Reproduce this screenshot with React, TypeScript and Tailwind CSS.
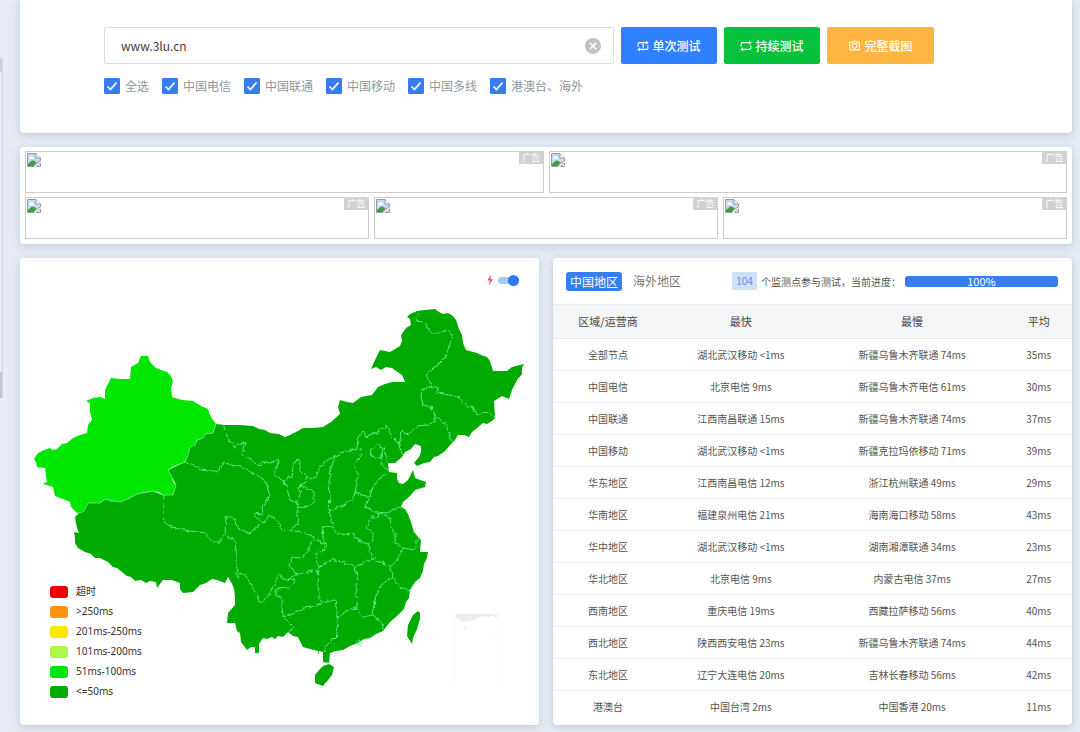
import { useState } from 'react';
import { RiCameraLine } from 'react-icons/ri';

const operators = ['全选', '中国电信', '中国联通', '中国移动', '中国多线', '港澳台、海外'];

const rows = [
  ['全部节点', '湖北武汉移动 <1ms', '新疆乌鲁木齐联通 74ms', '35ms'],
  ['中国电信', '北京电信 9ms', '新疆乌鲁木齐电信 61ms', '30ms'],
  ['中国联通', '江西南昌联通 15ms', '新疆乌鲁木齐联通 74ms', '37ms'],
  ['中国移动', '湖北武汉移动 <1ms', '新疆克拉玛依移动 71ms', '39ms'],
  ['华东地区', '江西南昌电信 12ms', '浙江杭州联通 49ms', '29ms'],
  ['华南地区', '福建泉州电信 21ms', '海南海口移动 58ms', '43ms'],
  ['华中地区', '湖北武汉移动 <1ms', '湖南湘潭联通 34ms', '23ms'],
  ['华北地区', '北京电信 9ms', '内蒙古电信 37ms', '27ms'],
  ['西南地区', '重庆电信 19ms', '西藏拉萨移动 56ms', '40ms'],
  ['西北地区', '陕西西安电信 23ms', '新疆乌鲁木齐联通 74ms', '44ms'],
  ['东北地区', '辽宁大连电信 20ms', '吉林长春移动 56ms', '42ms'],
  ['港澳台', '中国台湾 2ms', '中国香港 20ms', '11ms'],
];

const legend = [
  { label: '超时', color: 'bg-[#f00000]' },
  { label: '>250ms', color: 'bg-[#ff9310]' },
  { label: '201ms-250ms', color: 'bg-[#fbea00]' },
  { label: '101ms-200ms', color: 'bg-[#aef64a]' },
  { label: '51ms-100ms', color: 'bg-[#00e410]' },
  { label: '<=50ms', color: 'bg-[#00aa00]' },
];

const cardClass = 'bg-white rounded shadow-[0_2px_8px_rgba(130,150,175,0.4)]';

const XINJIANG =
  'M141 356L148 356L150 362L156 368L161 370L167 372L171 376L173 382L171 388L172 397L182 400L193 401L201 406L208 409L210 415L213 420L216 424L213 433L205 434L203 438L197 440L195 445L190 447L188 455L185 462L178 465L172 467L168 470L172 477L173 482L176 485L173 495L163 495L159 492L153 491L145 492L137 494L130 498L120 502L112 502L105 499L100 503L88 503L86 508L83 512L77 513L71 507L70 502L63 499L55 496L53 487L43 484L47 482L45 468L37 467L36 462L34 459L38 453L44 450L50 448L52 450L57 449L62 444L67 443L73 438L80 435L87 433L88 425L92 420L90 412L90 403L86 401L93 398L100 397L105 399L105 390L108 384L111 378L120 379L130 379L131 367L138 363Z';

const MAINLAND =
  'M216 424L225 425L240 425L253 426L259 429L265 430L270 433L279 434L285 437L290 435L296 432L303 428L313 428L323 427L331 422L340 414L338 407L340 400L347 402L353 403L361 397L372 395L378 387L385 384L392 382L405 382L402 375L392 368L386 367L381 370L376 367L371 369L374 362L380 350L390 352L400 346L402 341L401 335L406 328L411 325L410 319L407 317L410 314L417 311L425 310L435 309L439 312L443 314L448 313L453 316L456 320L459 329L462 335L463 343L466 350L477 353L481 355L487 357L490 361L493 371L507 371L512 367L524 364L522 368L522 374L517 380L512 390L509 399L502 396L494 401L495 418L492 421L487 424L483 423L476 429L472 432L469 437L464 435L458 435L455 440L452 443L445 451L438 456L434 457L430 462L424 463L417 466L414 463L419 457L421 452L421 446L415 444L411 449L405 452L402 457L395 463L388 463L389 472L397 473L397 479L399 483L403 484L408 480L413 470L415 478L420 480L426 482L425 487L415 490L410 496L403 502L401 507L405 509L408 514L411 522L414 532L418 537L421 540L420 552L428 552L427 558L424 564L423 571L420 578L415 582L410 590L409 598L406 602L404 609L397 616L390 622L383 631L376 634L370 638L364 639L358 643L350 646L343 650L336 651L330 653L329 663L323 662L323 652L319 651L319 656L318 651L310 649L303 647L301 643L298 637L293 636L288 632L283 637L278 636L275 639L272 637L267 639L263 638L259 644L259 653L255 653L255 647L251 647L247 650L241 642L240 633L237 631L235 623L227 623L228 613L235 605L235 598L234 588L231 582L228 577L225 583L217 580L212 579L206 583L200 585L193 592L183 593L180 589L180 583L172 580L163 580L157 588L156 582L150 581L146 583L141 580L135 581L131 577L127 576L117 568L113 567L108 562L100 558L95 558L91 554L85 552L78 548L75 543L75 538L74 532L79 533L77 528L76 523L75 517L79 513L83 512L88 503L100 503L105 499L112 502L120 502L130 498L137 494L153 491L163 495L173 495L176 485L168 470L185 462L190 447L205 434L213 433Z';

const BORDERS = [
  'M223 424L227 436L234 447L246 442L242 455L252 460L259 467L262 462L270 463L278 460L277 467L273 475L282 480L287 485L288 494L290 500L298 503L297 512L298 523L290 530L281 531L279 522L270 515L263 523L253 514L263 513L262 507L268 500L269 495L267 485L262 478L247 470L237 465L222 463L218 472L208 470L200 469L190 464L185 462',
  'M282 480L292 477L293 466L296 460L300 461L300 470L307 477L305 483L299 486L300 494L297 502M299 486L306 488L314 492L314 502L307 507L298 506',
  'M307 477L315 479L320 468L326 461L335 457L343 452L357 449L358 437L363 431L366 437L376 433L387 426L392 437L397 442L403 455',
  'M399 446L402 430L407 435L417 426L426 425L435 422L435 417L431 407L423 406L420 390L432 387L426 375L440 363L446 357L448 350L453 335L448 330L440 333L430 333L425 323L416 320L419 313',
  'M432 387L437 387L438 393L450 395L460 398L467 407L472 407L477 415L487 412L495 417',
  'M435 417L445 423L449 433L452 443',
  'M335 457L331 468L329 483L330 496L329 510L333 527L337 533L355 535L357 540L368 544L373 559',
  'M360 449L361 455L355 465L358 477L355 493L353 500L340 507L329 511M355 493L370 497L372 488L380 478L387 472',
  'M370 450L378 443L383 450L380 458L372 456ZM382 453L381 465L388 470M384 449L388 462',
  'M370 497L365 507L377 512L387 513L400 507M377 512L378 517L371 517L366 527L373 533L373 542L368 544',
  'M377 512L390 517L391 528L395 533L395 543L403 548L414 550L417 540M403 548L397 560L390 566L393 577L400 588L410 591',
  'M393 577L383 583L378 590L375 600L372 615L382 623L383 631',
  'M333 527L322 526L323 537L327 547L315 555L319 567L333 559L344 563L355 567L363 563L373 559L380 562L390 566',
  'M355 567L357 575L356 587L357 608L363 617L372 615M357 608L350 610L343 613L338 617L335 600L328 601L321 603L318 588L319 567',
  'M338 617L337 635L325 647L324 652M321 603L312 607L303 608L293 614L283 617L293 627L289 632',
  'M283 617L282 607L282 597L276 595L276 589L290 588L295 580L292 576L303 573L317 570L319 578',
  'M297 575L289 565L292 557L300 558L307 553L313 540L325 545M290 530L300 532L310 535L325 545',
  'M295 580L285 579L278 575L275 583L271 590L268 598L260 602L255 591L250 583L245 575L240 573L237 580',
  'M237 577L237 557L235 542L225 533L226 517L233 517L238 528L250 533L260 525M225 533L221 542L212 542L205 533L190 531L173 528L163 520L163 508L163 495',
  'M355 642L358 640L362 642L359 645Z',
];

function ChinaMap() {
  return (
    <svg viewBox="20 296 519 398" className="block w-full" role="img" aria-label="中国地图">
      <defs>
        <filter id="rough" x="0" y="0" width="100%" height="100%">
          <feTurbulence type="fractalNoise" baseFrequency="0.22" numOctaves="2" seed="4" result="n" />
          <feDisplacementMap in="SourceGraphic" in2="n" scale="5" xChannelSelector="R" yChannelSelector="G" />
        </filter>
      </defs>
      <path d={MAINLAND} fill="#00aa00" />
      <path d="M323 666L329 664L334 667L332 675L328 680L323 686L315 683L315 675L319 670Z" fill="#00aa00" />
      <path d="M418 611L420 613L420 619L417 629L413 638L412 644L407 636L408 625L413 615Z" fill="#00aa00" />
      <path d={XINJIANG} fill="#00e600" />
      <path
        d="M216 424L213 433L205 434L203 438L197 440L195 445L190 447L188 455L185 462L172 467L168 470L172 477L176 485L173 495L163 495L153 491L137 494L130 498L120 502L105 499L100 503L88 503L83 512"
        fill="none"
        stroke="#62ee8c"
        strokeWidth="0.8"
      />
      <g filter="url(#rough)" fill="none" stroke="#62f090" strokeWidth="0.9" strokeLinejoin="round">
        {BORDERS.map((d) => (
          <path key={d} d={d} />
        ))}
      </g>
      <path d="M455 614H497L489 617L481 616L474 620L464 622L456 618Z" fill="#ededed" />
      <path d="M494 616l4-2-1 4zM463 629l4-2-2 4zM492 638l3-2-1 3zM465 653l2-1M490 651l2 0M458 666l1-2M484 667l2-1" fill="#ededed" />
      <path d="M455 614V684M498 614V684" stroke="#f9f9f9" />
    </svg>
  );
}

function RepeatIcon({ once = false }: { once?: boolean }) {
  return (
    <svg viewBox="0 0 16 16" className="h-3 w-3" fill="none" stroke="currentColor" strokeWidth="1.4" aria-hidden="true">
      <path d="M1.500 9V5Q1.500 3.500 3 3.500H12.500" />
      <path d="M14.500 7V11Q14.500 12.500 13 12.500H3.500" />
      <path d="M12 0.800L15.500 3.500L12 6.200Z" fill="currentColor" stroke="none" />
      <path d="M4 9.800L0.500 12.500L4 15.200Z" fill="currentColor" stroke="none" />
      {once && <path d="M6.500 6.500L8.300 5.800V10.500" />}
    </svg>
  );
}

function Ad() {
  return (
    <a href="#ad" className="relative block h-[42px] border border-[#cccccc]">
      <svg viewBox="0 0 16 16" className="h-4 w-4" aria-hidden="true">
        <path d="M1.500 1.500H10L14.500 6V9L11 11L8 14.500H1.500Z" fill="#c3d9f5" stroke="#9a9a9a" />
        <path d="M10 1.500V6H14.500" fill="#fff" stroke="#9a9a9a" />
        <path d="M4 5.500a1.500 1.500 0 0 1 3 0h1v1.500H3V6z" fill="#fff" />
        <path d="M2 14V12L6 8.500Q9 8.500 10.500 10.500L7.500 14Z" fill="#3f9b45" />
        <path d="M14.500 11V14.500H10.500Z" fill="#fff" stroke="#9a9a9a" />
      </svg>
      <span className="absolute -top-px -right-px flex h-[13px] w-[25px] items-center justify-center bg-[#d2d2d2] text-[9px] text-white">
        广告
      </span>
    </a>
  );
}

function Operator({ label }: { label: string }) {
  return (
    <label className="flex items-center gap-[5px]">
      <span className="grid h-4 w-4">
        <input
          type="checkbox"
          defaultChecked
          className="peer col-start-1 row-start-1 h-4 w-4 appearance-none rounded-[1px] border border-[#377df0] checked:bg-[#377df0]"
        />
        <svg
          viewBox="0 0 16 16"
          className="pointer-events-none invisible col-start-1 row-start-1 h-4 w-4 peer-checked:visible"
          aria-hidden="true"
        >
          <path d="M3.500 8.500L6.500 11.500L12.500 4.500" fill="none" stroke="#fff" strokeWidth="1.700" />
        </svg>
      </span>
      {label}
    </label>
  );
}

const buttonClass = 'flex h-[37px] items-center justify-center gap-[3px] rounded-[2px] text-xs font-medium text-white';

export default function App() {
  const [host, setHost] = useState('www.3lu.cn');

  return (
    <div className="flex min-h-screen bg-[#e6ebf5] font-['Noto_Sans_CJK_SC',sans-serif] text-[#555]">
      <div className="flex w-[3px] shrink-0 flex-col pt-[58px]">
        <div className="flex h-[340px] flex-col justify-between border-r border-[#d3d7df]">
          <div className="h-[14px] bg-[#cdd0d6]" />
          <div className="h-[26px] bg-[#c3c6cc]" />
        </div>
      </div>

      <main className="flex min-w-0 flex-1 flex-col gap-[14px] pr-2 pb-[7px] pl-[17px]">
        <section className={`${cardClass} rounded-t-none pt-[27px] pr-[138px] pb-[38px] pl-[84px]`}>
          <form className="flex gap-[7px]" onSubmit={(e) => e.preventDefault()}>
            <div className="flex h-[37px] min-w-0 flex-1 items-center rounded-[2px] border border-[#dcdcdc] pr-3 pl-4">
              <input
                type="text"
                aria-label="域名"
                value={host}
                onChange={(e) => setHost(e.target.value)}
                className="min-w-0 flex-1 bg-transparent text-xs text-[#444] outline-none"
              />
              <button type="button" aria-label="清空" onClick={() => setHost('')}>
                <svg viewBox="0 0 16 16" className="h-4 w-4" aria-hidden="true">
                  <circle cx="8" cy="8" r="8" fill="#c2c2c2" />
                  <path d="M4.800 4.800L11.200 11.200M11.200 4.800L4.800 11.200" stroke="#fff" strokeWidth="1.500" />
                </svg>
              </button>
            </div>
            <button type="submit" className={`${buttonClass} w-24 bg-[#2e80ff]`}>
              <RepeatIcon once />
              单次测试
            </button>
            <button type="button" className={`${buttonClass} w-24 bg-[#06c13c]`}>
              <RepeatIcon />
              持续测试
            </button>
            <button type="button" className={`${buttonClass} w-[107px] bg-[#ffb541]`}>
              <RiCameraLine size={13} />
              完整截图
            </button>
          </form>
          <div className="mt-[13px] flex h-[18px] items-center gap-[13px] text-xs text-[#8f97a0]">
            {operators.map((o) => (
              <Operator key={o} label={o} />
            ))}
          </div>
        </section>

        <section className={`${cardClass} flex flex-col gap-1 px-[5px] pt-1 pb-[5px]`}>
          <div className="grid grid-cols-2 gap-[5px]">
            <Ad />
            <Ad />
          </div>
          <div className="grid grid-cols-3 gap-[5px]">
            <Ad />
            <Ad />
            <Ad />
          </div>
        </section>

        <div className="grid grid-cols-2 gap-[14px]">
          <section className={`${cardClass} relative pt-[15px]`}>
            <label className="flex h-[14px] items-center justify-end gap-1 pr-5">
              <svg viewBox="0 0 8 12" className="h-3 w-2" aria-hidden="true">
                <path d="M5 0.500L1.500 6.500H4L3 11.500L6.800 5.200H4.300Z" fill="#ef4656" />
              </svg>
              <input
                type="checkbox"
                role="switch"
                defaultChecked
                aria-label="快速模式"
                className="flex h-[7px] w-[21px] appearance-none items-center rounded-full bg-[#a9c7f8] before:h-[11px] before:w-[11px] before:rounded-full before:bg-[#2e78f0] checked:justify-end"
              />
            </label>
            <div className="mt-[9px]">
              <ChinaMap />
            </div>
            <ul className="absolute bottom-[23px] left-[30px] font-['Noto_Sans','Noto_Sans_CJK_SC',sans-serif] text-[10px] text-[#333]">
              {legend.map((l) => (
                <li key={l.label} className="flex h-[20px] items-center gap-2">
                  <span className={`h-3 w-[18px] rounded-[3px] ${l.color}`} />
                  {l.label}
                </li>
              ))}
            </ul>
          </section>

          <section className={`${cardClass} overflow-hidden pb-[2px]`}>
            <div className="flex h-[46px] items-center pr-[14px] pl-[13px]">
              <button type="button" className="h-[19px] w-14 rounded-[3px] bg-[#377df0] text-xs leading-[19px] text-white">
                中国地区
              </button>
              <button type="button" className="ml-[11px] text-xs text-[#777]">
                海外地区
              </button>
              <div className="ml-auto flex items-center text-[10px]">
                <span className="mr-1 h-[18px] w-[25px] rounded-[2px] bg-[#cfe0fb] text-center leading-[18px] text-[#5b8fe0]">
                  104
                </span>
                <span className="whitespace-nowrap">个监测点参与测试，当前进度：</span>
              </div>
              <div
                role="progressbar"
                aria-label="当前进度"
                aria-valuenow={100}
                className="ml-1 h-[11px] w-[153px] rounded-[3px] bg-[#377df0] text-center text-[11px] leading-[11px] text-white"
              >
                100%
              </div>
            </div>
            <table className="w-full table-fixed text-center text-[10px]">
              <thead className="bg-[#f4f5f6] text-[11px] text-[#444]">
                <tr className="h-[34px] border-y border-[#ececee]">
                  <th className="w-[21.2%] font-normal">区域/运营商</th>
                  <th className="w-[30%] font-normal">最快</th>
                  <th className="w-[36%] font-normal">最慢</th>
                  <th className="font-normal">平均</th>
                </tr>
              </thead>
              <tbody>
                {rows.map((r) => (
                  <tr key={r[0]} className="h-8 border-b border-[#f0f0f0] last:border-b-0">
                    {r.map((c, i) => (
                      <td key={i} className="whitespace-nowrap">
                        {c}
                      </td>
                    ))}
                  </tr>
                ))}
              </tbody>
            </table>
          </section>
        </div>
      </main>
    </div>
  );
}
